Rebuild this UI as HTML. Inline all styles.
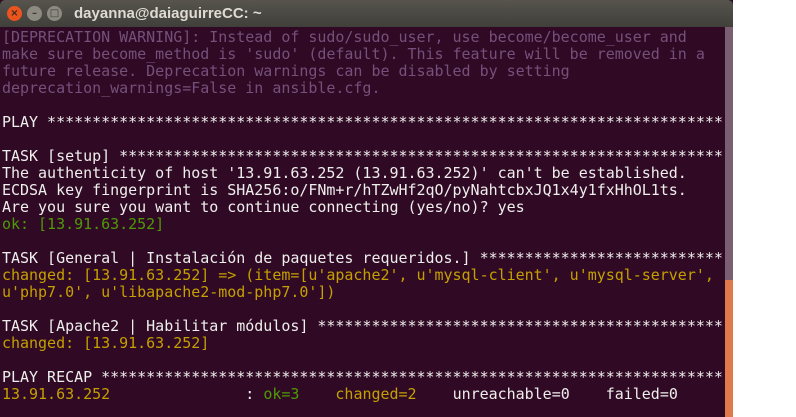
<!DOCTYPE html>
<html><head><meta charset="utf-8"><style>
body{margin:0;width:796px;height:417px;background:#fff;overflow:hidden;position:relative}
.win{position:absolute;left:0;top:0;width:733px;height:417px;background:#300a24}
.title{position:absolute;left:0;top:0;width:733px;height:27px;background:linear-gradient(#56544d,#403f3a);border-radius:5px 5px 0 0;font:bold 15px "Liberation Sans",sans-serif;color:#dfdbd2}
.title span.t{position:absolute;left:74px;top:5px}
.b{position:absolute;top:6px;width:15px;height:15px;border-radius:50%;font:bold 10px "DejaVu Sans",sans-serif;text-align:center;line-height:15px}
.sb{position:absolute;left:725px;top:27px;width:8px;height:390px;background:#7a5f73}
.sb2{position:absolute;left:725px;top:280px;width:8px;height:137px;background:#e07a4c}
pre{position:absolute;left:2px;top:29px;width:721px;overflow:hidden;margin:0;font:15px "DejaVu Sans Mono",monospace;line-height:17px;color:#eeeeec;letter-spacing:-0.02px}
.p{color:#75507b}.g{color:#4e9a06}.y{color:#c4a000}
</style></head><body>
<div class="win">
<div class="title">
<div class="b" style="left:7px;background:#e9541f;color:#3a2a20">×</div>
<div class="b" style="left:27px;background:#8d8a82;color:#3c3b37">–</div>
<div class="b" style="left:47px;background:#8d8a82;color:#3c3b37">□</div>
<span class="t">dayanna@daiaguirreCC: ~</span></div>
<pre><span class="p">[DEPRECATION WARNING]: Instead of sudo/sudo_user, use become/become_user and
make sure become_method is 'sudo' (default). This feature will be removed in a
future release. Deprecation warnings can be disabled by setting
deprecation_warnings=False in ansible.cfg.</span>

PLAY ***************************************************************************

TASK [setup] *******************************************************************
The authenticity of host '13.91.63.252 (13.91.63.252)' can't be established.
ECDSA key fingerprint is SHA256:o/FNm+r/hTZwHf2qO/pyNahtcbxJQ1x4y1fxHhOL1ts.
Are you sure you want to continue connecting (yes/no)? yes
<span class="g">ok: [13.91.63.252]</span>

TASK [General | Instalación de paquetes requeridos.] ***************************
<span class="y">changed: [13.91.63.252] =&gt; (item=[u'apache2', u'mysql-client', u'mysql-server',
u'php7.0', u'libapache2-mod-php7.0'])</span>

TASK [Apache2 | Habilitar módulos] *********************************************
<span class="y">changed: [13.91.63.252]</span>

PLAY RECAP *********************************************************************
<span class="y">13.91.63.252</span>               : <span class="g">ok=3</span>    <span class="y">changed=2</span>    unreachable=0    failed=0
</pre>
<div class="sb"></div><div class="sb2"></div>
</div>
</body></html>
